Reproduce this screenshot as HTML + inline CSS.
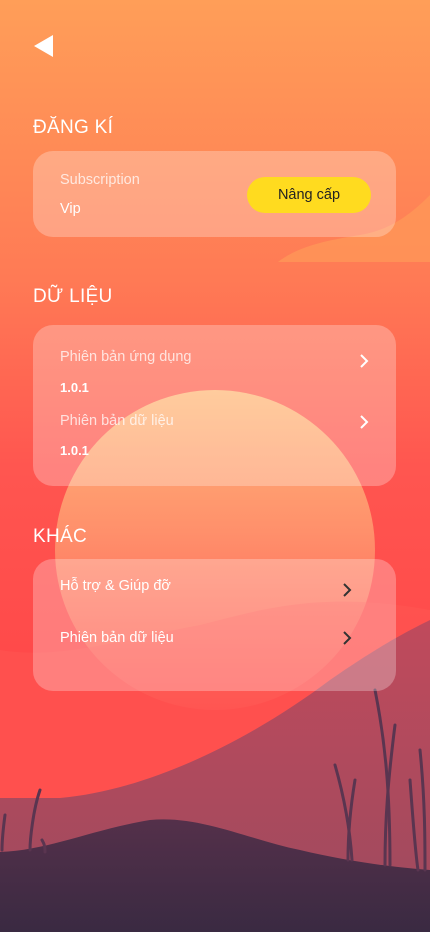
<!DOCTYPE html>
<html><head><meta charset="utf-8"><style>
body{margin:0;width:430px;height:932px;overflow:hidden;position:relative;font-family:"Liberation Sans",sans-serif;background:linear-gradient(#ff9e58 0%,#ff7a55 30%,#ff5650 50%,#ff4a4a 70%,#ff4a4a 100%);}
svg.bg{position:absolute;left:0;top:0}
.h{position:absolute;left:33px;color:#fff;font-size:19px;letter-spacing:0.3px}
.card{position:absolute;left:33px;width:363px;background:rgba(255,255,255,0.27);border-radius:20px}
.t{position:absolute;left:27px;color:rgba(255,255,255,0.75);font-size:14.5px}
.v{position:absolute;left:27px;color:#fff;font-size:13px;font-weight:bold}
.btn{position:absolute;left:214px;top:26px;width:124px;height:36px;border-radius:18px;background:#ffdb1f;color:#222;font-size:14.5px;text-align:center;line-height:36px}
.ch{position:absolute}
</style></head><body>
<svg class="bg" width="430" height="932" viewBox="0 0 430 932">
<defs>
<linearGradient id="sun" x1="0" y1="0" x2="0" y2="1"><stop offset="0" stop-color="#ffc880"/><stop offset="0.45" stop-color="#ff9a70"/><stop offset="1" stop-color="#ff5452"/></linearGradient>
<linearGradient id="mt" x1="0" y1="0" x2="0" y2="1"><stop offset="0" stop-color="#c04a5c"/><stop offset="1" stop-color="#9c4a5e"/></linearGradient>
<linearGradient id="dk" x1="0" y1="0" x2="0" y2="1"><stop offset="0" stop-color="#54304a"/><stop offset="1" stop-color="#3a2a42"/></linearGradient>
</defs>
<path d="M278 262 C300 245 330 240 360 235 C390 230 410 215 430 195 L430 262 Z" fill="#ff9a58" opacity="0.7"/>
<circle cx="215" cy="550" r="160" fill="url(#sun)" opacity="0.85"/>
<path d="M0 650 C60 660 120 640 200 625 C260 610 320 590 430 610 L430 932 L0 932 Z" fill="#ff5a55" opacity="0.4"/>
<path d="M0 798 L60 798 C150 790 250 740 330 680 C380 645 410 630 430 620 L430 932 L0 932 Z" fill="url(#mt)"/>
<path d="M0 852 C50 850 90 830 150 820 C200 815 250 840 300 850 C350 862 400 868 430 870 L430 932 L0 932 Z" fill="url(#dk)"/>
<g stroke="#5a3550" stroke-width="3" fill="none" stroke-linecap="round">
<path d="M375 690 C385 740 390 790 390 865"/><path d="M395 725 C388 780 385 820 385 865"/><path d="M335 765 C345 800 350 830 352 860"/><path d="M355 780 C350 810 348 840 348 860"/><path d="M410 780 C413 820 415 850 418 870"/><path d="M420 750 C425 800 425 840 425 870"/><path d="M40 790 C33 810 30 840 30 850"/><path d="M5 815 C3 830 2 840 2 850"/><path d="M42 840 C45 845 45 848 45 852"/>
</g>
</svg>
<svg style="position:absolute;left:33px;top:34px" width="22" height="24"><path d="M20 1 L20 23 L1 12 Z" fill="#fff"/></svg>
<div class="h" style="top:117px">ĐĂNG KÍ</div>
<div class="card" style="top:151px;height:86px">
<div class="t" style="top:21px">Subscription</div>
<div class="v" style="top:50px;font-weight:normal;font-size:14.5px">Vip</div>
<div class="btn">Nâng cấp</div>
</div>
<div class="h" style="top:286px">DỮ LIỆU</div>
<div class="card" style="top:325px;height:161px">
<div class="t" style="top:24px">Phiên bản ứng dụng</div>
<div class="v" style="top:55px">1.0.1</div>
<div class="t" style="top:88px">Phiên bản dữ liệu</div>
<div class="v" style="top:118px">1.0.1</div>
<svg class="ch" style="left:326px;top:28px" width="10" height="16"><path d="M2 2 L8 8 L2 14" stroke="#fff" stroke-width="2" fill="none"/></svg>
<svg class="ch" style="left:326px;top:89px" width="10" height="16"><path d="M2 2 L8 8 L2 14" stroke="#fff" stroke-width="2" fill="none"/></svg>
</div>
<div class="h" style="top:526px">KHÁC</div>
<div class="card" style="top:559px;height:132px">
<div class="t" style="top:19px;color:#fff">Hỗ trợ &amp; Giúp đỡ</div>
<div class="t" style="top:71px;color:#fff">Phiên bản dữ liệu</div>
<svg class="ch" style="left:309px;top:23px" width="10" height="16"><path d="M2 2 L8 8 L2 14" stroke="#333" stroke-width="2" fill="none"/></svg>
<svg class="ch" style="left:309px;top:71px" width="10" height="16"><path d="M2 2 L8 8 L2 14" stroke="#333" stroke-width="2" fill="none"/></svg>
</div>
</body></html>
